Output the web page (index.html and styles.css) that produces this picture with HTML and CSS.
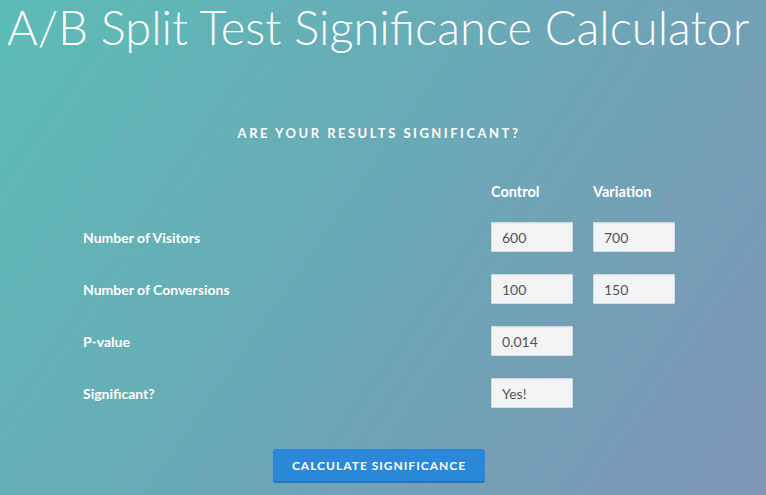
FILE: index.html
```html
<!DOCTYPE html>
<html lang="en">
<head>
    <meta charset="UTF-8">
    <meta name="viewport" content="width=device-width, initial-scale=1.0">
    <title>A/B Split Test Significance Calculator</title>
    <link rel="stylesheet" href="styles.css">
</head>
<body>
    <header>
        <h1>A/B Split Test Significance Calculator</h1>
    </header>

    <main>
        <h2>Are your results significant?</h2>

        <div class="calc">
            <div></div>
            <div class="col-head">Control</div>
            <div class="col-head">Variation</div>

            <label for="visitors-a">Number of Visitors</label>
            <input type="text" id="visitors-a" value="600" />
            <input type="text" id="visitors-b" value="700" />

            <label for="conversions-a">Number of Conversions</label>
            <input type="text" id="conversions-a" value="100" />
            <input type="text" id="conversions-b" value="150" />

            <label for="pvalue">P-value</label>
            <input type="text" id="pvalue" value="0.014" readonly />
            <div></div>

            <label for="significant">Significant?</label>
            <input type="text" id="significant" value="Yes!" readonly />
            <div></div>
        </div>

        <div class="actions">
            <button>Calculate Significance</button>
        </div>
    </main>
</body>
</html>
```

FILE: styles.css
```css
html, body {
    height: 100%;
}
body {
    font-family: Lato, "Open Sans", sans-serif;
    color: white;
    margin: 0;
    padding: 0;
    min-height: 495px;
    background: linear-gradient(125deg, #5cbcb5 0%, #6ba8b6 50%, #7f95b7 100%);
    overflow: hidden;
}
header {
    padding: 0 7px;
}
h1 {
    margin: -1px 0 0;
    font-size: 47px;
    font-weight: 300;
    line-height: 56px;
    white-space: nowrap;
}
main {
    width: 592px;
    margin: 0 0 0 83px;
}
h2 {
    margin: 70px 0 0;
    font-size: 13px;
    line-height: 16px;
    font-weight: 700;
    letter-spacing: 2.5px;
    text-transform: uppercase;
    text-align: center;
}
.calc {
    display: grid;
    grid-template-columns: 388px 82px 82px;
    grid-auto-rows: 30px;
    grid-template-rows: 16px;
    column-gap: 20px;
    row-gap: 22px;
    align-items: center;
    margin-top: 43px;
}
.col-head {
    font-size: 14.5px;
    font-weight: 700;
    line-height: 16px;
}
label {
    font-size: 14px;
    font-weight: 700;
}
input {
    box-sizing: border-box;
    width: 82px;
    height: 30px;
    padding: 0 10px;
    font-family: Lato, sans-serif;
    font-size: 14px;
    color: #555;
    background: #f3f4f6;
    border: 1px solid #d6dbe0;
    border-radius: 1px;
    box-shadow: inset 0 1px 1px rgba(0, 0, 0, 0.04);
}
.actions {
    margin-top: 41px;
    text-align: center;
}
button {
    width: 212px;
    height: 34px;
    font-family: Lato, sans-serif;
    font-size: 12px;
    font-weight: 700;
    letter-spacing: 1px;
    text-transform: uppercase;
    color: white;
    background-color: #2b88d9;
    border: none;
    border-bottom: 2px solid #2475bd;
    border-radius: 3px;
    cursor: pointer;
}
button:hover {
    background-color: #2379c4;
}
```
